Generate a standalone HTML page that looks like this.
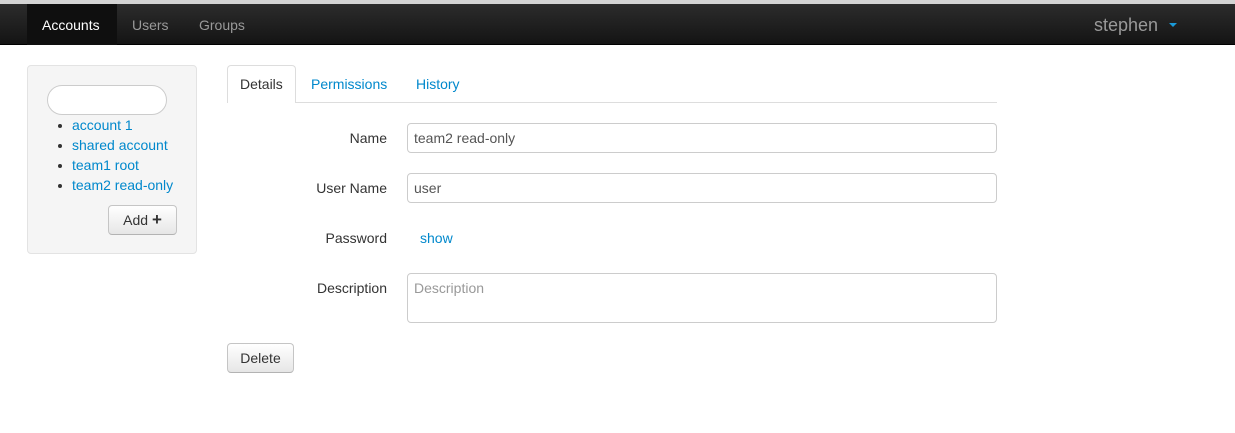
<!DOCTYPE html>
<html><head><style>
*{box-sizing:border-box}
body{margin:0;width:1235px;height:433px;background:#fff;font-family:"Liberation Sans",sans-serif;font-size:14px;color:#333;position:relative;overflow:hidden}
.a{position:absolute}
.top{left:0;top:0;width:1235px;height:4px;background:#d4d4d4}
.nav{left:0;top:4px;width:1235px;height:41px;background:linear-gradient(#2c2c2c,#141414);border-bottom:1px solid #000}
.nav span{position:absolute;top:13px;color:#999;font-size:14px}
.act{left:27px;top:0;width:90px;height:41px;background:#0f0f0f}
.side{left:27px;top:65px;width:170px;height:189px;background:#f5f5f5;border:1px solid #e3e3e3;border-radius:4px}
.search{left:47px;top:85px;width:120px;height:30px;border:1px solid #ccc;border-radius:15px;background:#fff}
.lnk{color:#0088cc}
.li{left:72px;font-size:14px}
.dot{left:58px;width:4px;height:4px;border-radius:2px;background:#333}
.btn{border:1px solid #c5c5c5;border-bottom-color:#b3b3b3;border-radius:4px;background:linear-gradient(#fff,#e6e6e6);font-size:14px;color:#333;text-align:center}
.tabline{left:227px;top:102px;width:770px;height:1px;background:#ddd}
.tab{left:227px;top:65px;width:69px;height:38px;border:1px solid #ddd;border-bottom:none;border-radius:4px 4px 0 0;background:#fff}
.lab{width:160px;left:227px;text-align:right;font-size:14px}
.inp{left:407px;width:590px;height:30px;border:1px solid #ccc;border-radius:4px;padding:6px 6px;font-size:14px;color:#555}
</style></head><body>
<div class="a top"></div>
<div class="a nav"><div class="a act"></div>
<span style="left:42px;color:#fff">Accounts</span>
<span style="left:132px">Users</span>
<span style="left:199px">Groups</span>
<span style="left:1094px;top:11px;font-size:18px;color:#999">stephen</span>
<div class="a" style="left:1169px;top:19px;width:0;height:0;border-left:4px solid transparent;border-right:4px solid transparent;border-top:4px solid #1a9ad8"></div>
</div>
<div class="a side"></div>
<div class="a search"></div>
<div class="a dot" style="top:124px"></div><div class="a li lnk" style="top:117px">account 1</div>
<div class="a dot" style="top:144px"></div><div class="a li lnk" style="top:137px">shared account</div>
<div class="a dot" style="top:164px"></div><div class="a li lnk" style="top:157px">team1 root</div>
<div class="a dot" style="top:184px"></div><div class="a li lnk" style="top:177px">team2 read-only</div>
<div class="a btn" style="left:108px;top:205px;width:69px;height:30px;padding-top:6px">Add <b style="font-size:17px;line-height:14px">+</b></div>
<div class="a tabline"></div>
<div class="a tab"></div>
<div class="a" style="left:240px;top:76px">Details</div>
<div class="a lnk" style="left:311px;top:76px">Permissions</div>
<div class="a lnk" style="left:416px;top:76px">History</div>
<div class="a lab" style="top:130px">Name</div>
<div class="a inp" style="top:123px">team2 read-only</div>
<div class="a lab" style="top:180px">User Name</div>
<div class="a inp" style="top:173px">user</div>
<div class="a lab" style="top:230px">Password</div>
<div class="a lnk" style="left:420px;top:230px">show</div>
<div class="a lab" style="top:280px">Description</div>
<div class="a inp" style="top:273px;height:50px;color:#999">Description</div>
<div class="a btn" style="left:227px;top:343px;width:67px;height:30px;padding-top:6px">Delete</div>
</body></html>
